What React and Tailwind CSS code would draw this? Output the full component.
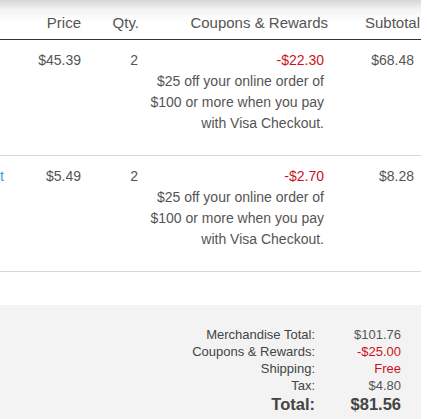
export default function App() {
  const desc = [
    "$25 off your online order of",
    "$100 or more when you pay",
    "with Visa Checkout.",
  ];
  const rows = [
    { name: "", price: "$45.39", qty: "2", coupon: "-$22.30", subtotal: "$68.48" },
    { name: "t", price: "$5.49", qty: "2", coupon: "-$2.70", subtotal: "$8.28" },
  ];
  return (
    <div
      className="w-[428px] h-[419px] bg-white overflow-hidden text-[#555]"
      style={{ fontFamily: '"Liberation Sans", Arial, sans-serif' }}
    >
      <div className="w-[421px]">
        {/* header */}
        <div className="flex h-[40px] pt-[13px] text-[15px] leading-[20px] border-b border-[#333] bg-[linear-gradient(to_bottom,#d6d6d6_0px,#f4f4f4_10px,#ffffff_22px)]">
          <div className="w-[81px] text-right">Price</div>
          <div className="w-[58px] text-right">Qty.</div>
          <div className="w-[189px] text-right">Coupons &amp; Rewards</div>
          <div className="w-[92px] text-right">Subtotal</div>
        </div>
        {rows.map((r, i) => (
          <div
            key={i}
            className="flex h-[116px] pt-[10px] text-[14px] leading-[21px] border-b border-[#d8d8d8]"
          >
            <div className="w-[4px] overflow-hidden text-right text-[#2a9fd8] whitespace-nowrap">
              {r.name}
            </div>
            <div className="w-[77px] text-right">{r.price}</div>
            <div className="w-[57px] text-right">{r.qty}</div>
            <div className="w-[186px] text-right">
              <div className="text-[#cc1122]">{r.coupon}</div>
              {desc.map((d, j) => (
                <div key={j} className="whitespace-nowrap">
                  {d}
                </div>
              ))}
            </div>
            <div className="w-[90px] text-right">{r.subtotal}</div>
          </div>
        ))}
        <div className="h-[33px]" />
        {/* summary */}
        <div className="bg-[#f3f3f3] h-[120px] pt-[21px]">
          <div className="grid grid-cols-[315px_86px] text-[13px] leading-[17px]">
            <div className="text-right text-[#444]">Merchandise Total:</div>
            <div className="text-right text-[#555]">$101.76</div>
            <div className="text-right text-[#444]">Coupons &amp; Rewards:</div>
            <div className="text-right text-[#cc1122]">-$25.00</div>
            <div className="text-right text-[#444]">Shipping:</div>
            <div className="text-right text-[#cc1122]">Free</div>
            <div className="text-right text-[#444]">Tax:</div>
            <div className="text-right text-[#555]">$4.80</div>
            <div className="text-right text-[16.5px] leading-[20px] font-bold text-[#444]">Total:</div>
            <div className="text-right text-[16.5px] leading-[20px] font-bold text-[#444]">$81.56</div>
          </div>
        </div>
      </div>
    </div>
  );
}
